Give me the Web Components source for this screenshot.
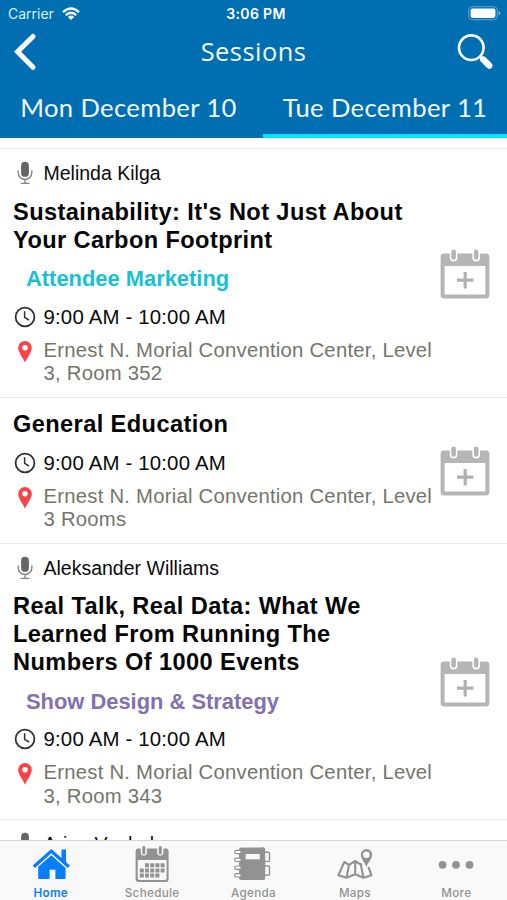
<!DOCTYPE html>
<html lang="en">
<head>
<meta charset="utf-8">
<title>Sessions</title>
<style>
  html, body { margin: 0; height: 100%; overflow: hidden; background: #fff; }
</style>
</head>
<body>
<session-app></session-app>
<script>
const define = (name, markup, fill) => {
  const template = document.createElement('template');
  template.innerHTML = markup;
  customElements.define(name, class extends HTMLElement {
    connectedCallback() {
      if (this.shadowRoot) return;
      const root = this.attachShadow({ mode: 'open' });
      root.append(template.content.cloneNode(true));
      if (fill) fill(root, this);
    }
  });
};

define('status-bar', `
<style>
  :host { display: grid; grid-template-columns: 1fr auto 1fr; align-items: center; height: 27px; padding: 0 6px 0 8px; box-sizing: border-box; color: #fff; font: 14px/20px Inter, sans-serif; }
  .left { display: flex; align-items: center; gap: 8px; color: #d9effb; }
  .time { font-weight: 600; font-size: 14px; letter-spacing: .35px; padding-left: 3px; }
  .right { display: flex; justify-content: flex-end; }
  svg { display: block; }
</style>
<div class="left"><span>Carrier</span>
  <svg width="18" height="14" viewBox="0 0 18 14" fill="none" stroke="#fff" stroke-width="2.3"><path d="M1 5.1Q9-2 17 5.1M3.8 8.1Q9 3.4 14.2 8.1"/><path d="M5.9 9.9Q9 7.2 12.1 9.9L9 13.1Z" fill="#fff" stroke="none"/></svg>
</div>
<div class="time">3:06 PM</div>
<div class="right"><svg width="33" height="15" viewBox="0 0 33 15"><rect x=".7" y=".7" width="28.6" height="13" rx="3.6" fill="none" stroke="#5fa5d2" stroke-width="1"/><rect x="2.6" y="2.5" width="24.8" height="9.4" rx="1.8" fill="#fff"/><path d="M30.6 5q1.7.4 1.7 2.2T30.6 9.4Z" fill="#75b1d9"/></svg></div>
`);

define('nav-bar', `
<style>
  :host { display: grid; grid-template-columns: 60px 1fr 60px; align-items: center; height: 50px; color: #f2faff; }
  h1 { margin: 0; font: 400 25.4px/34px "Open Sans", sans-serif; letter-spacing: .5px; text-align: center; padding-bottom: 3px; }
  svg { display: block; }
</style>
<svg width="60" height="50" viewBox="0 27 60 50"><path d="M33 36.5L17.6 51.8 33 67.2" fill="none" stroke="#fff" stroke-width="5.1" stroke-linecap="round" stroke-linejoin="miter"/></svg>
<h1>Sessions</h1>
<svg width="60" height="50" viewBox="447 27 60 50" fill="none" stroke="#fff"><circle cx="471.3" cy="47.7" r="12.3" stroke-width="2.6"/><path d="M480 56.4l3 3" stroke-width="3.4"/><path d="M483.3 59.6l5.9 6" stroke-width="6.4" stroke-linecap="round"/></svg>
`);

define('day-tab', `
<style>
  :host { display: flex; align-items: center; justify-content: center; box-sizing: border-box; height: 61px; color: #f2faff; border-bottom: 4px solid transparent; padding-top: 2px; font: 25.6px/32px Lato, sans-serif; letter-spacing: .38px; white-space: nowrap; }
  :host([selected]) { border-bottom-color: #00e5fb; }
</style>
<slot></slot>
`);

define('tabs-row', `
<style>
  :host { display: grid; grid-template-columns: 263px 1fr; }
  ::slotted(:first-child) { padding-right: 6px; }
</style>
<slot></slot>
`);

const icons = {
  mic: '<svg width="16" height="24" viewBox="0 0 16 24"><rect x="4.1" y=".8" width="7.8" height="15" rx="3.9" fill="#656565"/><path d="M1.2 9.5v2.2a6.8 6.8 0 0 0 13.6 0V9.5M8 18.5v3.6M3.6 22.4h8.8" fill="none" stroke="#858585" stroke-width="1.4"/></svg>',
  clock: '<svg width="22" height="22" viewBox="0 0 22 22" fill="none" stroke="#303030"><circle cx="11" cy="11" r="9.4" stroke-width="1.8"/><path d="M10.6 5.2v6.2l4.400 2.600" stroke-width="1.5"/></svg>',
  pin: '<svg width="16" height="24" viewBox="0 0 16 24"><path fill="#fb4247" fill-rule="evenodd" d="M8 1A6.8 6.8 0 0 0 1.2 7.8C1.2 12.5 5.6 17.2 8 22.6 10.4 17.2 14.8 12.5 14.8 7.8A6.8 6.8 0 0 0 8 1ZM8 4.9a2.8 2.8 0 1 1 0 5.6 2.8 2.8 0 0 1 0-5.6Z"/></svg>'
};

define('info-line', `
<style>
  :host { display: grid; grid-template-columns: 24px 1fr; column-gap: 6.5px; font: 20.4px/24px "Liberation Sans", Arial, sans-serif; color: #0b0b0b; }
  :host([kind=clock]) { letter-spacing: .18px; }
  :host([kind=mic]) { font-size: 19.5px; }
  :host([kind=pin]) { font-size: 20.3px; line-height: 23.5px; letter-spacing: .24px; color: #74756a; }
  .icon { display: flex; justify-content: center; align-items: center; height: 24px; padding-left: .5px; }
  :host([kind=pin]) .icon { padding-top: 1px; }
  svg { display: block; }
</style>
<span class="icon"></span><span><slot></slot></span>
`, (root, host) => { root.querySelector('.icon').innerHTML = icons[host.getAttribute('kind')]; });

define('add-button', `
<style>:host { display: block; width: 50px; height: 50px; padding-top: 1px; } svg { display: block; }</style>
<svg width="50" height="50" viewBox="0 0 50 50">
  <path fill="#b5b5b5" fill-rule="evenodd" d="M4 4.6H46Q49.4 4.6 49.4 8V46Q49.4 49.4 46 49.4H4Q.6 49.4.6 46V8Q.6 4.6 4 4.6ZM4.6 17V45.4H45.4V17Z"/>
  <g stroke-linecap="round"><path d="M13.6 3.3v5.4M36.2 3.3v5.4" stroke="#fff" stroke-width="7.6"/><path d="M13.6 2.8v5.6M36.2 2.8v5.6" stroke="#b5b5b5" stroke-width="4.6"/></g>
  <path d="M17 31.2h16.4M25.2 23v16.4" stroke="#b0b0b0" stroke-width="3.2"/>
</svg>
`);

define('session-item', `
<style>
  :host { display: grid; grid-template-columns: 1fr 50px; align-items: center; box-sizing: border-box; border-bottom: 1.5px solid #ebebeb; padding: 12px 17px 12px 13px; font-family: "Liberation Sans", Arial, sans-serif; }
  .body { margin-right: -8px; align-self: start; }
  h2 { margin: 0; font-size: 23.6px; line-height: 28px; font-weight: 700; letter-spacing: .4px; color: #050505; white-space: pre-line; }
  ::slotted([slot=speaker]) { margin-bottom: 12.5px; }
  ::slotted([slot=track]) { display: block; padding: 11.5px 0 0 13px; font-size: 21.9px; line-height: 27px; font-weight: 700; color: var(--track); }
  ::slotted([kind=clock]) { margin-top: 12.5px; }
  ::slotted([kind=pin]) { margin-top: 10px; white-space: pre-line; }
</style>
<div class="body"><slot name="speaker"></slot><h2></h2><slot name="track"></slot><slot></slot></div>
<add-button></add-button>
`, (root, host) => { root.querySelector('h2').textContent = host.getAttribute('heading'); });

define('tab-button', `
<style>
  :host { display: flex; flex-direction: column; align-items: center; color: #929292; font: 500 11.7px/16px Inter, sans-serif; letter-spacing: .3px; }
  :host([active]) { color: #087dff; font-weight: 600; }
  ::slotted(svg) { display: block; width: 44px; height: 44px; }
</style>
<slot name="icon"></slot><span><slot></slot></span>
`);

define('bottom-bar', `
<style>
  :host { display: grid; grid-template-columns: repeat(5, 1fr); height: 60px; box-sizing: border-box; border-top: 1px solid #d5d5d5; background: #f9f9f9; flex: none; }
</style>
<slot></slot>
`);

define('session-app', `
<style>
  :host { display: flex; flex-direction: column; width: 507px; height: 900px; overflow: hidden; background: #fff; }
  header { background: #006fb2; flex: none; height: 138px; }
  main { flex: 1; min-height: 0; overflow: hidden; display: flex; flex-direction: column; }
  .gap { height: 10px; flex: none; border-bottom: 1px solid #ececec; }
  session-item { flex: none; }
  .a { height: 249px; } .b { height: 145.5px; } .c { height: 276.5px; } .d { height: 249px; }
</style>
<header>
  <status-bar></status-bar>
  <nav-bar></nav-bar>
  <tabs-row><day-tab>Mon December 10</day-tab><day-tab selected>Tue December 11</day-tab></tabs-row>
</header>
<main>
  <div class="gap"></div>
  <session-item class="a" heading="Sustainability: It's Not Just About&#10;Your Carbon Footprint" style="--track:#15c1d6">
    <info-line slot="speaker" kind="mic">Melinda Kilga</info-line>
    <span slot="track">Attendee Marketing</span>
    <info-line kind="clock">9:00 AM - 10:00 AM</info-line>
    <info-line kind="pin">Ernest N. Morial Convention Center, Level&#10;3, Room 352</info-line>
  </session-item>
  <session-item class="b" heading="General Education">
    <info-line kind="clock">9:00 AM - 10:00 AM</info-line>
    <info-line kind="pin">Ernest N. Morial Convention Center, Level&#10;3 Rooms</info-line>
  </session-item>
  <session-item class="c" heading="Real Talk, Real Data: What We&#10;Learned From Running The&#10;Numbers Of 1000 Events" style="--track:#8370ad">
    <info-line slot="speaker" kind="mic">Aleksander Williams</info-line>
    <span slot="track">Show Design &amp; Strategy</span>
    <info-line kind="clock">9:00 AM - 10:00 AM</info-line>
    <info-line kind="pin">Ernest N. Morial Convention Center, Level&#10;3, Room 343</info-line>
  </session-item>
  <session-item class="d" heading="">
    <info-line slot="speaker" kind="mic">Arjan Vonhala</info-line>
  </session-item>
</main>
<bottom-bar>
  <tab-button active><svg slot="icon" viewBox="0 0 44 44" fill="#087dff"><path d="M22.3 8l10.200 9V8.600h4.500v12.500l3.900 3.500-2.200 2.400-16.400-14.700L5.900 27l-2.200-2.400Z"/><path d="M22.300 14.200L36.600 27v9.700q0 1.200-1.200 1.200h-9v-9.200h-5.800v9.200h-10.200q-1.200 0-1.200-1.200V25.700Z"/></svg>Home</tab-button>
  <tab-button><svg slot="icon" viewBox="0 0 44 44"><path fill="#929292" fill-rule="evenodd" d="M8 7.5H36Q38.6 7.5 38.6 10V38Q38.6 41 36 41H8.500Q5.600 41 5.600 38V10Q5.600 7.500 8 7.500ZM7.700 19V37Q7.700 39 9.500 39H35Q36.600 39 36.600 37V19Z"/><g fill="none" stroke-linecap="round"><path d="M13.8 6.500V11.500M30.300 6.500V11.500" stroke="#f9f9f9" stroke-width="6.200"/><path d="M13.800 6.500V12M30.300 6.500V12" stroke="#929292" stroke-width="3"/></g><g fill="none" stroke="#929292" stroke-width="4" stroke-dasharray="4 1.200"><path d="M15 24.300H35M9.800 29.400H35M9.800 34.500H29.500"/></g></svg>Schedule</tab-button>
  <tab-button><svg slot="icon" viewBox="0 0 44 44"><rect x="8" y="6.500" width="29" height="32.500" rx="2.500" fill="#929292"/><rect x="33.200" y="6" width="6" height="34" fill="#f9f9f9"/><path d="M31 6.500h1.500q1.700 0 1.700 1.700v29q0 1.800-1.700 1.800H31Z" fill="#929292"/><path d="M34 11.200h3.500q1 0 1 1v7.200q0 1-1 1H34M34 25h3.500q1 0 1 1v7.200q0 1-1 1H34" fill="none" stroke="#929292" stroke-width="1.400"/><rect x="14.600" y="13" width="14.200" height="5.300" fill="#f9f9f9"/><g fill="#f9f9f9" stroke="#929292" stroke-width="1.200"><rect x="3.700" y="9.400" width="6.500" height="3.300" rx="1.600"/><rect x="3.700" y="17.200" width="6.500" height="3.300" rx="1.600"/><rect x="3.700" y="25" width="6.500" height="3.300" rx="1.600"/><rect x="3.700" y="32.700" width="6.500" height="3.300" rx="1.600"/></g></svg>Agenda</tab-button>
  <tab-button><svg slot="icon" viewBox="0 0 44 44" fill="none" stroke="#929292" stroke-width="2.100" stroke-linejoin="round"><path d="M29 22.800l-1.200.8-5.600-3.600-6.200 3.800-4.700-2.800L5.400 34.300l8.100 2.500 8.700-3.600 8.300 3.600 8-2.500-3.100-8.500M16 23.800L13.500 36.800M22.200 20V33.200M27.800 23.600L30.500 36.800"/><path d="M33.400 26.300C32 21.300 27.800 18 27.800 13.700a5.700 5.700 0 0 1 11.400 0C39.200 18 34.800 21.300 33.400 26.300ZM33.400 10.400a3.300 3.300 0 1 0 0 6.600 3.300 3.300 0 0 0 0-6.600Z" fill="#929292" fill-rule="evenodd" stroke="none"/></svg>Maps</tab-button>
  <tab-button><svg slot="icon" viewBox="0 0 44 44" fill="#929292"><circle cx="8.600" cy="23.800" r="3.900"/><circle cx="22" cy="23.800" r="3.900"/><circle cx="35.500" cy="23.800" r="3.900"/></svg>More</tab-button>
</bottom-bar>
`);
</script>
</body>
</html>
